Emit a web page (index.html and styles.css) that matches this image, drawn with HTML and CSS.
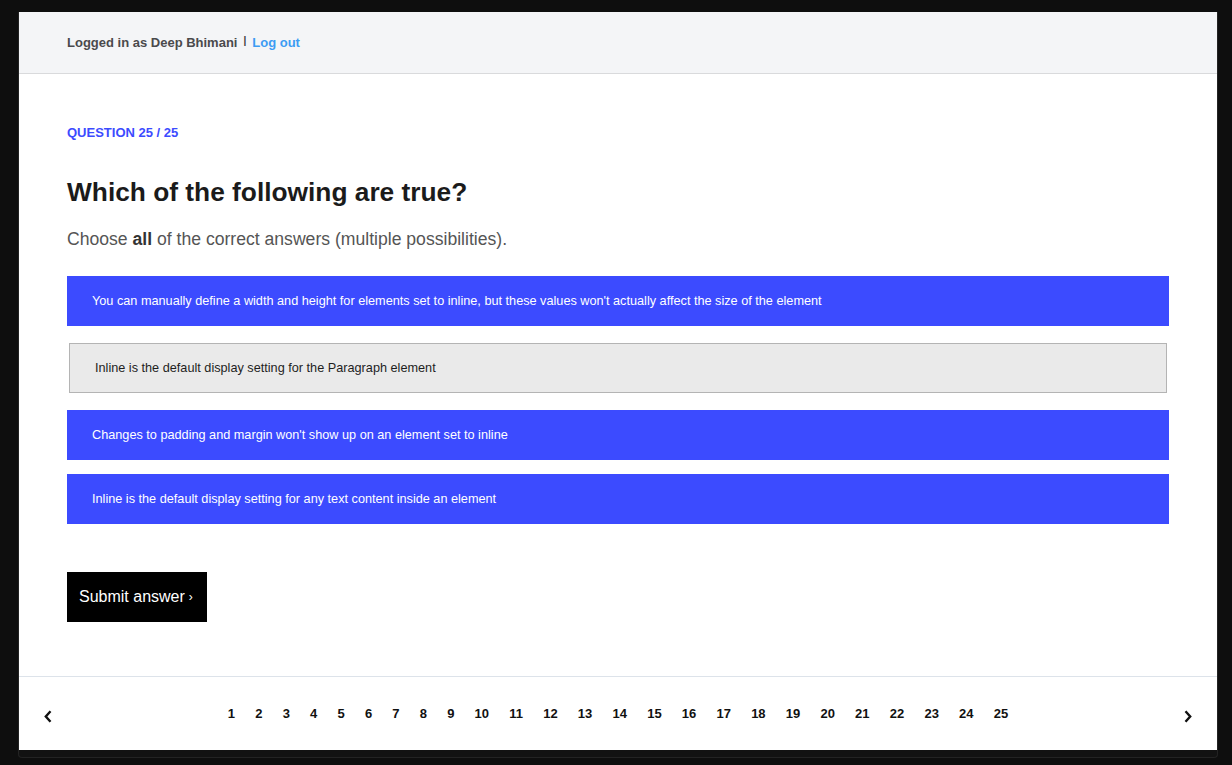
FILE: index.html
```html
<!DOCTYPE html>
<html lang="en">
<head>
<meta charset="utf-8">
<title>Quiz</title>
<link rel="stylesheet" href="styles.css">
</head>
<body>
<div class="window">
  <div class="page">
    <header class="topbar">
      <span class="user">Logged in as Deep Bhimani</span>
      <span class="sep">|</span>
      <a class="logout" href="#">Log out</a>
    </header>
    <main class="quiz">
      <div class="qlabel">QUESTION 25 / 25</div>
      <h1 class="qtitle">Which of the following are true?</h1>
      <p class="qhint">Choose <strong>all</strong> of the correct answers (multiple possibilities).</p>
      <ul class="options">
        <li class="option selected">You can manually define a width and height for elements set to inline, but these values won't actually affect the size of the element</li>
        <li class="option plain">Inline is the default display setting for the Paragraph element</li>
        <li class="option selected">Changes to padding and margin won't show up on an element set to inline</li>
        <li class="option selected last">Inline is the default display setting for any text content inside an element</li>
      </ul>
      <button class="submit">Submit answer <span class="chev">›</span></button>
    </main>
    <footer class="pager">
      <span class="arrow"><svg width="8" height="13" viewBox="0 0 8 13"><path d="M6.5 1.2 L1.8 6.5 L6.5 11.8" fill="none" stroke="#111" stroke-width="2.4"/></svg></span>
      <nav class="pages">
        <span>1</span><span>2</span><span>3</span><span>4</span><span>5</span><span>6</span><span>7</span><span>8</span><span>9</span><span>10</span><span>11</span><span>12</span><span>13</span><span>14</span><span>15</span><span>16</span><span>17</span><span>18</span><span>19</span><span>20</span><span>21</span><span>22</span><span>23</span><span>24</span><span>25</span>
      </nav>
      <span class="arrow"><svg width="8" height="13" viewBox="0 0 8 13"><path d="M1.5 1.2 L6.2 6.5 L1.5 11.8" fill="none" stroke="#111" stroke-width="2.4"/></svg></span>
    </footer>
  </div>
</div>
</body>
</html>
```

FILE: styles.css
```css
* { box-sizing: border-box; }
html, body { margin: 0; padding: 0; }
body {
  background: #0e0e0e;
  font-family: "Liberation Sans", Arial, Helvetica, sans-serif;
  width: 1232px;
  height: 765px;
  overflow: hidden;
}
.window {
  margin: 12px 0 0 18px;
  width: 1200px;
  background: #121212;
  border: 1px solid #232323;
  border-top: none;
  border-radius: 0 0 4px 4px;
  padding-bottom: 7px;
}
.page {
  background: #fff;
  width: 1198px;
}
.topbar {
  height: 62px;
  background: #f4f5f7;
  border-bottom: 1px solid #d9dadc;
  padding-left: 48px;
  display: flex;
  align-items: center;
  font-size: 13px;
  font-weight: bold;
}
.user { color: #4a4a4c; }
.sep {
  color: #3a3a3c;
  font-size: 10px;
  font-weight: bold;
  margin: -4px 6px 0 6px;
}
.logout {
  color: #3d9cf3;
  text-decoration: none;
}
.quiz {
  padding: 52px 48px 54px 48px;
}
.qlabel {
  font-size: 13px;
  line-height: 14px;
  font-weight: bold;
  color: #3c4bff;
}
.qtitle {
  margin: 37px 0 0 0;
  font-size: 26.3px;
  line-height: 30px;
  font-weight: bold;
  color: #1b1b1b;
}
.qhint {
  margin: 22px 0 0 0;
  font-size: 17.6px;
  line-height: 20px;
  color: #555;
}
.qhint strong { color: #333; }
.options {
  list-style: none;
  margin: 27px 0 0 0;
  padding: 0;
  display: flex;
  flex-direction: column;
  gap: 17px;
}
.option {
  height: 50px;
  display: flex;
  align-items: center;
  padding-left: 25px;
  font-size: 12.7px;
}
.option.last { margin-top: -3px; }
.option.selected {
  background: #3c4bff;
  color: #fff;
}
.option.plain {
  background: #eaeaea;
  border: 1px solid #b4b4b4;
  color: #1e1e1e;
  margin: 0 2px;
}
.submit {
  margin-top: 48px;
  width: 140px;
  height: 50px;
  background: #000;
  color: #fff;
  border: none;
  font-family: inherit;
  font-size: 16px;
  text-align: left;
  padding: 0 12px;
  display: flex;
  align-items: center;
  gap: 4px;
}
.chev { font-size: 12px; }
.pager {
  height: 74px;
  border-top: 1px solid #dde3ea;
  display: flex;
  align-items: center;
  justify-content: space-between;
  padding: 0 25px;
}
.arrow {
  display: flex;
  width: 8px;
  height: 13px;
  margin-top: 6px;
}
.pages {
  display: flex;
  font-size: 13px;
  font-weight: bold;
  color: #111;
}
.pages span { padding: 0 10.1px; }
```
